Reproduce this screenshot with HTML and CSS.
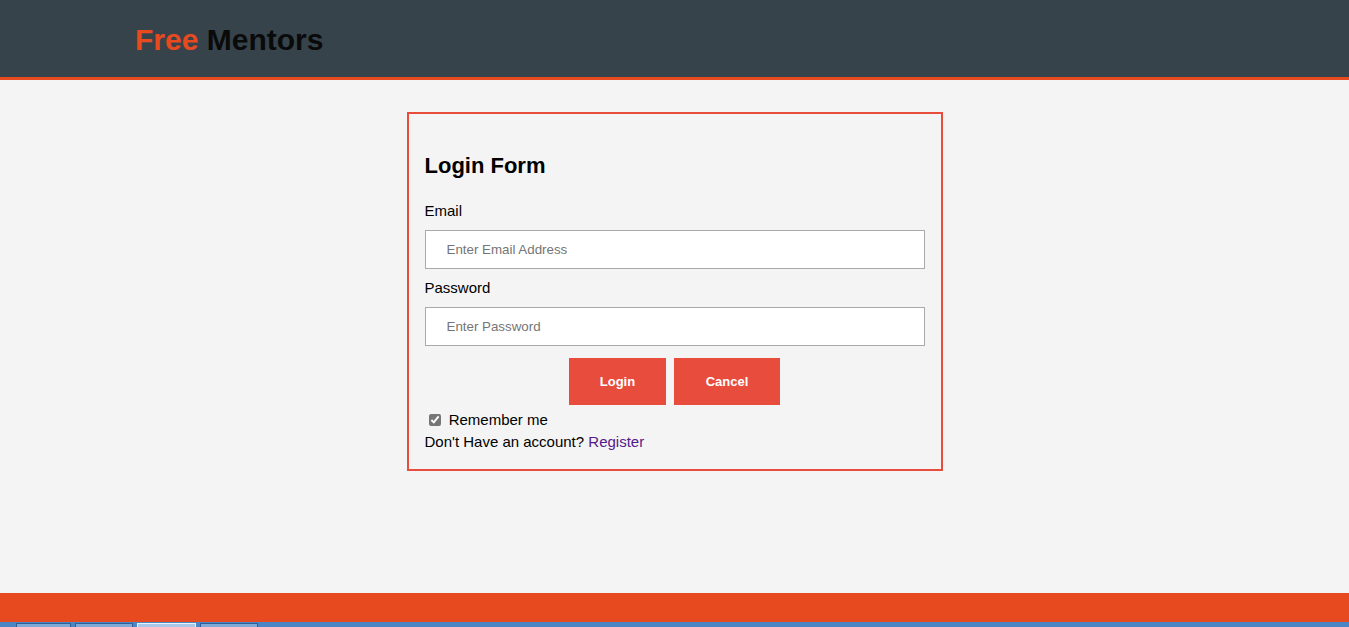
FILE: index.html
```html
<!DOCTYPE html>
<html lang="en">
<head>
<meta charset="utf-8">
<title>Free Mentors - Login</title>
<link rel="stylesheet" href="styles.css">
</head>
<body>
<div class="page">
  <header class="topbar">
    <div class="logo"><span class="logo-free">Free</span> Mentors</div>
  </header>
  <main class="main">
    <form class="login-box">
      <h2 class="title">Login Form</h2>
      <label class="field-label" for="email">Email</label>
      <input class="field" id="email" type="text" placeholder="Enter Email Address">
      <label class="field-label" for="password">Password</label>
      <input class="field" id="password" type="password" placeholder="Enter Password">
      <div class="actions">
        <button type="button" class="btn btn-login">Login</button>
        <button type="button" class="btn btn-cancel">Cancel</button>
      </div>
      <label class="remember"><input type="checkbox" class="check" checked> Remember me</label>
      <div class="signup">Don't Have an account? <a class="link" href="#">Register</a></div>
    </form>
  </main>
  <footer class="footer"></footer>
  <div class="taskbar">
    <span class="task t1"></span><span class="task t2"></span><span class="task t3"></span><span class="task t4"></span>
  </div>
</div>
</body>
</html>
```

FILE: styles.css
```css
html, body {
  margin: 0;
  padding: 0;
}
body {
  font-family: "Liberation Sans", Arial, sans-serif;
  background: #f4f4f4;
  color: #000;
}
.page {
  display: flex;
  flex-direction: column;
  height: 627px;
  overflow: hidden;
}
.topbar {
  height: 77px;
  background: #36434b;
  border-bottom: 3px solid #e84a1f;
  padding: 0 135px;
  flex-shrink: 0;
}
.logo {
  margin-top: 23px;
  font-size: 30px;
  line-height: 34px;
  font-weight: bold;
  color: #0a0a0a;
}
.logo-free {
  color: #e84a1f;
}
.main {
  flex: 1;
  padding-top: 32px;
}
.login-box {
  width: 500px;
  margin: 0 auto;
  border: 2px solid #e74c3c;
  padding: 16px 16px 19px;
  display: flex;
  flex-direction: column;
}
.title {
  font-size: 22px;
  line-height: 25px;
  font-weight: bold;
  margin: 23px 0 24px;
}
.field-label {
  font-size: 15px;
  line-height: 17px;
  margin-bottom: 11px;
}
.field {
  box-sizing: border-box;
  height: 39px;
  width: 100%;
  border: 1px solid #a9a9a9;
  background: #fff;
  padding: 0 21px;
  font-family: "Liberation Sans", Arial, sans-serif;
  font-size: 13.333px;
  margin: 0 0 10px;
  outline: none;
}
.field::placeholder {
  color: #757575;
}
.actions {
  display: flex;
  justify-content: center;
  gap: 8px;
  margin-top: 2px;
}
.btn {
  height: 47px;
  border: none;
  background: #e74c3c;
  color: #fff;
  font-family: "Liberation Sans", Arial, sans-serif;
  font-weight: bold;
  font-size: 13px;
  padding: 0;
}
.btn-login {
  width: 97px;
}
.btn-cancel {
  width: 106px;
}
.remember {
  display: flex;
  align-items: center;
  font-size: 15px;
  line-height: 17px;
  height: 17px;
  margin-top: 6px;
  white-space: pre;
}
.check {
  width: 12px;
  height: 12px;
  margin: 0 4px 0 4px;
  accent-color: #767676;
}
.signup {
  font-size: 15px;
  line-height: 17px;
  margin-top: 5px;
}
.link {
  color: #551a8b;
  text-decoration: none;
}
.footer {
  height: 29px;
  background: #e84a1f;
  flex-shrink: 0;
}
.taskbar {
  height: 5px;
  background: #4a86c5;
  flex-shrink: 0;
  display: flex;
  gap: 4px;
  padding-left: 16px;
  align-items: flex-end;
}
.task {
  height: 4px;
  box-sizing: border-box;
  border: 1px solid #2f5f95;
  border-bottom: none;
  background: #7ea9d6;
}
.t1 { width: 55px; }
.t2 { width: 58px; }
.t3 { width: 59px; background: #a9c7e8; border-color: #e8f0fa; }
.t4 { width: 58px; }
```
